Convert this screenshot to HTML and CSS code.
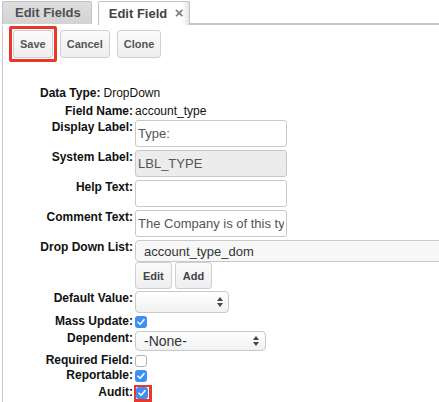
FILE: index.html
```html
<!DOCTYPE html>
<html>
<head>
<meta charset="utf-8">
<link rel="stylesheet" href="styles.css">
</head>
<body>
<div class="tabs">
  <div class="tab">Edit Fields</div>
  <div class="tab tab-active">Edit Field <span class="tab-close">×</span></div>
  <div class="tab-rest"></div>
</div>
<div class="panel">
  <div class="toolbar">
    <span class="highlight"><button class="btn btn-save">Save</button></span>
    <button class="btn">Cancel</button>
    <button class="btn">Clone</button>
  </div>
  <div class="form">
    <div class="row row-intro mb4"><span class="label label-inline">Data Type:</span><span class="value">DropDown</span></div>
    <div class="row mb2"><span class="label">Field Name:</span><span class="value">account_type</span></div>
    <div class="row mb3"><span class="label">Display Label:</span><input class="text" value="Type:"></div>
    <div class="row mb3"><span class="label">System Label:</span><input class="text text-disabled" value="LBL_TYPE" readonly></div>
    <div class="row mb3"><span class="label">Help Text:</span><input class="text" value=""></div>
    <div class="row mb3"><span class="label">Comment Text:</span><input class="text" value="The Company is of this type"></div>
    <div class="row"><span class="label">Drop Down List:</span><div class="select select-list"><span>account_type_dom</span></div></div>
    <div class="row mb2"><span class="label"></span><div class="btn-group"><button class="btn btn-small">Edit</button><button class="btn btn-small">Add</button></div></div>
    <div class="row mb1"><span class="label">Default Value:</span>
      <div class="select select-default"><span></span>
        <svg class="arrows" width="6" height="10" viewBox="0 0 6 10"><polygon points="0,4 3,0 6,4"/><polygon points="0,6 6,6 3,10"/></svg>
      </div>
    </div>
    <div class="row mb3"><span class="label">Mass Update:</span><span class="cb cb-on"><svg width="12" height="12" viewBox="0 0 12 12"><path d="M3 6.2 L5.1 8.3 L9 3.7"/></svg></span></div>
    <div class="row mb2"><span class="label">Dependent:</span>
      <div class="select select-dep"><span>-None-</span>
        <svg class="arrows" width="6" height="10" viewBox="0 0 6 10"><polygon points="0,4 3,0 6,4"/><polygon points="0,6 6,6 3,10"/></svg>
      </div>
    </div>
    <div class="row mb1"><span class="label">Required Field:</span><span class="cb cb-off"></span></div>
    <div class="row mb3"><span class="label">Reportable:</span><span class="cb cb-on"><svg width="12" height="12" viewBox="0 0 12 12"><path d="M3 6.2 L5.1 8.3 L9 3.7"/></svg></span></div>
    <div class="row"><span class="label">Audit:</span><span class="highlight highlight-cb"><span class="cb cb-on"><svg width="12" height="12" viewBox="0 0 12 12"><path d="M3 6.2 L5.1 8.3 L9 3.7"/></svg></span></span></div>
  </div>
</div>
</body>
</html>
```
FILE: styles.css
```css
html, body {
  margin: 0;
  padding: 0;
  overflow: hidden;
  background: #fff;
  font-family: "Liberation Sans", Arial, sans-serif;
  color: #111;
}

.tabs {
  display: flex;
  align-items: flex-start;
  height: 25px;
  box-sizing: border-box;
  padding: 1px 0 0 2px;
}

.tab {
  height: 23px;
  box-sizing: border-box;
  padding: 0 10px 0 12px;
  margin-right: 6px;
  background: linear-gradient(#dedede, #d3d3d3);
  border: 1px solid #c2c2c2;
  border-bottom: none;
  border-radius: 2px 2px 0 0;
  font-weight: bold;
  font-size: 13px;
  line-height: 22px;
  color: #505050;
  white-space: nowrap;
}

.tab-active {
  height: 24px;
  margin-right: 0;
  padding: 0 5px 0 10px;
  background: linear-gradient(90deg, #fff 0, #fff calc(100% - 7px), #e4e4e4 100%);
  color: #444;
}

.tab-close {
  font-size: 15px;
  font-weight: bold;
  color: #808080;
  margin-left: 4px;
}

.tab-rest {
  flex: 1;
  align-self: stretch;
  border-bottom: 2px solid #c6c6c6;
}

.panel {
  margin-left: 2px;
  border-left: 1px solid #cacaca;
  min-height: 377px;
}

.toolbar {
  display: flex;
  align-items: flex-start;
  padding: 1px 0 0 6px;
}

.highlight {
  display: block;
  border: 3px solid #e8382a;
  border-radius: 2px;
  padding: 1px;
  margin-right: 3px;
}

.btn {
  height: 28px;
  box-sizing: border-box;
  padding: 0 6px;
  margin: 4px 7px 0 0;
  border: 1px solid #cfcfcf;
  border-radius: 3px;
  background: linear-gradient(#fbfbfb, #eeeeee);
  font-family: "Liberation Sans", Arial, sans-serif;
  font-weight: bold;
  font-size: 11px;
  color: #555;
}

.btn-save {
  display: block;
  margin: 0;
}

.form {
  margin-top: 24px;
}

.row {
  display: flex;
  align-items: flex-start;
}

.mb1 { margin-bottom: 1px; }
.mb2 { margin-bottom: 2px; }
.mb3 { margin-bottom: 3px; }
.mb4 { margin-bottom: 4px; }

.row-intro {
  padding-left: 37px;
}

.label {
  flex: 0 0 130px;
  margin-right: 2px;
  text-align: right;
  font-weight: bold;
  font-size: 12px;
  line-height: 14px;
  color: #111;
  white-space: nowrap;
}

.label-inline {
  flex: none;
  margin-right: 3px;
}

.value {
  font-size: 12px;
  line-height: 14px;
  color: #111;
}

.text {
  width: 152px;
  height: 27px;
  box-sizing: border-box;
  margin: 0;
  padding: 0 2px;
  border: 1px solid #c9c9c9;
  border-radius: 3px;
  background: #fff;
  font-family: "Liberation Sans", Arial, sans-serif;
  font-size: 13px;
  color: #555;
  outline: none;
}

.text-disabled {
  background: #ececec;
}

.select {
  display: flex;
  align-items: center;
  justify-content: space-between;
  box-sizing: border-box;
  border: 1px solid #c9c9c9;
  border-radius: 4px;
  background: linear-gradient(#ffffff, #f1f1f1);
  color: #333;
  white-space: nowrap;
}

.select-list {
  width: 345px;
  flex: none;
  height: 22px;
  padding-left: 8px;
  background: #f7f7f7;
  font-size: 13px;
}

.select-default {
  width: 94px;
  height: 22px;
  padding: 0 5px 0 8px;
}

.select-dep {
  width: 131px;
  height: 20px;
  padding: 0 6px 0 8px;
  font-size: 14px;
}

.arrows {
  fill: #444;
  flex: none;
}

.btn-group {
  display: flex;
}

.btn-small {
  height: 27px;
  padding: 0 7px;
  margin: 0 3px 0 0;
  color: #444;
}

.cb {
  display: block;
  width: 12px;
  height: 12px;
  margin-top: 2px;
  box-sizing: border-box;
  border-radius: 3px;
}

.cb svg {
  display: block;
}

.cb path {
  fill: none;
  stroke: #fff;
  stroke-width: 1.6;
  stroke-linecap: round;
  stroke-linejoin: round;
}

.cb-on {
  background: #3d8ef5;
}

.cb-off {
  background: #fff;
  border: 1px solid #b3b3b3;
}

.highlight-cb {
  margin: 0 0 0 -1px;
  padding: 0 1px 0 0;
  border-width: 2px 3px 3px 2px;
  border-radius: 0;
}

.highlight-cb .cb {
  margin-top: 0;
}
```
